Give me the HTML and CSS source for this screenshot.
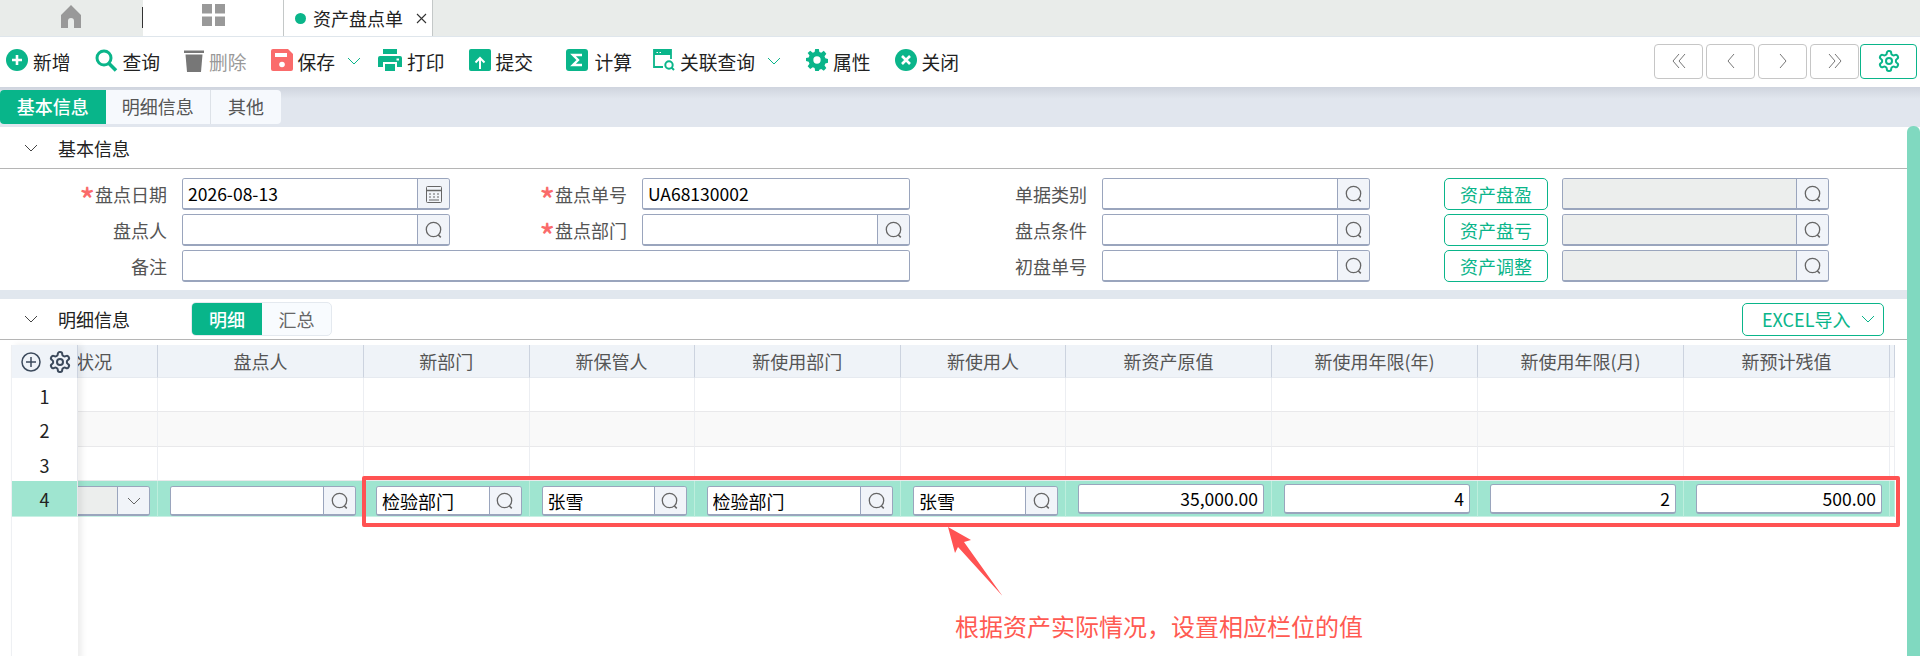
FILE: index.html
```html
<!DOCTYPE html>
<html lang="zh-CN">
<head>
    <meta charset="UTF-8">
    <meta name="viewport" content="width=device-width, initial-scale=1.0">
    <title>资产盘点单</title>
    <link rel="stylesheet" href="styles.css">
</head>
<body>
    <svg class="sprite" xmlns="http://www.w3.org/2000/svg">
        <symbol id="i-search" viewBox="0 0 20 20"><circle cx="9.5" cy="9.5" r="7.2" fill="none" stroke="currentColor" stroke-width="1.3"/><path d="M14.2 14.8l2.6 2.6" fill="none" stroke="currentColor" stroke-width="1.5"/></symbol>
        <symbol id="i-chevron" viewBox="0 0 14 8"><path d="M1 1l6 6 6-6" fill="none" stroke="currentColor" stroke-width="1"/></symbol>
        <symbol id="i-gear" viewBox="0 0 24 24"><path d="M12.22 2h-.44a2 2 0 0 0-2 2v.18a2 2 0 0 1-1 1.73l-.43.25a2 2 0 0 1-2 0l-.15-.08a2 2 0 0 0-2.73.73l-.22.38a2 2 0 0 0 .73 2.73l.15.1a2 2 0 0 1 1 1.72v.51a2 2 0 0 1-1 1.74l-.15.09a2 2 0 0 0-.73 2.73l.22.38a2 2 0 0 0 2.73.73l.15-.08a2 2 0 0 1 2 0l.43.25a2 2 0 0 1 1 1.73V20a2 2 0 0 0 2 2h.44a2 2 0 0 0 2-2v-.18a2 2 0 0 1 1-1.73l.43-.25a2 2 0 0 1 2 0l.15.08a2 2 0 0 0 2.73-.73l.22-.39a2 2 0 0 0-.73-2.73l-.15-.08a2 2 0 0 1-1-1.74v-.5a2 2 0 0 1 1-1.74l.15-.09a2 2 0 0 0 .73-2.73l-.22-.38a2 2 0 0 0-2.73-.73l-.15.08a2 2 0 0 1-2 0l-.43-.25a2 2 0 0 1-1-1.73V4a2 2 0 0 0-2-2z" fill="none" stroke="currentColor" stroke-width="2"/><circle cx="12" cy="12" r="3" fill="none" stroke="currentColor" stroke-width="2"/></symbol>
    </svg>

    <div class="page">
        <div class="tabbar">
            <div class="tab-home">
                <svg width="22" height="23" viewBox="0 0 22 23"><path d="M11 0L21 10v13h-7v-7a3 3 0 0 0-6 0v7H1V10z" fill="#999"/></svg>
            </div>
            <div class="tab-dash">
                <svg width="23" height="22" viewBox="0 0 23 22"><path d="M0 0h10v9.5H0zM13 0h10v9.5H13zM0 12.5h10V22H0zM13 12.5h10V22H13z" fill="#999"/></svg>
            </div>
            <div class="tab-doc">
                <span class="tab-dot"></span>
                <span>资产盘点单</span>
                <svg class="tab-close" width="11" height="11" viewBox="0 0 11 11"><path d="M1 1l9 9M10 1l-9 9" stroke="#333" stroke-width="1.1"/></svg>
            </div>
        </div>

        <div class="toolbar">
            <div class="tool">
                <svg class="tool-icon" width="22" height="22" viewBox="0 0 22 22"><circle cx="11" cy="11" r="11" fill="#0ab58a"/><path d="M11 6v10M6 11h10" stroke="#fff" stroke-width="2.6"/></svg>
                <span>新增</span>
            </div>
            <div class="tool">
                <svg class="tool-icon" width="23" height="23" viewBox="0 0 23 23"><circle cx="9" cy="9" r="7" fill="none" stroke="#0ab58a" stroke-width="3"/><path d="M13.5 14l7.5 7.5" stroke="#0ab58a" stroke-width="3.6"/></svg>
                <span>查询</span>
            </div>
            <div class="tool tool-disabled">
                <svg class="tool-icon" width="20" height="23" viewBox="0 0 20 23"><path d="M0 1.5h20V4H0z" fill="#777"/><path d="M1.5 5.5h17L17 23H3z" fill="#777"/></svg>
                <span>删除</span>
            </div>
            <div class="tool tool-menu">
                <svg class="tool-icon" width="22" height="22" viewBox="0 0 22 22"><path d="M2 0h15l5 5v15a2 2 0 0 1-2 2H2a2 2 0 0 1-2-2V2a2 2 0 0 1 2-2z" fill="#fa6b6b"/><path d="M4 4h12v4H4z" fill="#fff"/><circle cx="11" cy="15.5" r="2.8" fill="#fff"/></svg>
                <span>保存</span>
                <svg class="tool-chevron" width="14" height="8"><use href="#i-chevron"/></svg>
            </div>
            <div class="tool">
                <svg class="tool-icon" width="24" height="22" viewBox="0 0 24 22"><path d="M5 0h14v5H5z" fill="#0ab58a"/><path d="M2 7h20a2 2 0 0 1 2 2v9h-5v-5H5v5H0V9a2 2 0 0 1 2-2z" fill="#0ab58a"/><path d="M7 15h10v7H7z" fill="#0ab58a"/><path d="M18.5 9.5H21v2h-2.5z" fill="#fff"/></svg>
                <span>打印</span>
            </div>
            <div class="tool tool-far">
                <svg class="tool-icon" width="22" height="22" viewBox="0 0 22 22"><rect width="22" height="22" rx="2" fill="#0ab58a"/><path d="M11 20V10M6.5 13.5L11 9l4.5 4.5" fill="none" stroke="#fff" stroke-width="2"/></svg>
                <span>提交</span>
            </div>
            <div class="tool tool-near">
                <svg class="tool-icon" width="22" height="22" viewBox="0 0 22 22"><rect width="22" height="22" rx="3" fill="#0ab58a"/><path d="M16 6H7l5 5-5 5h9" fill="none" stroke="#fff" stroke-width="2.4"/></svg>
                <span class="tool-wide">计算</span>
            </div>
            <div class="tool tool-menu tool-menu-wide">
                <svg class="tool-icon" width="22" height="22" viewBox="0 0 22 22"><path d="M10 18H1V1h17v9" fill="none" stroke="#0ab58a" stroke-width="1.8"/><path d="M1 1h17v5H1z" fill="#0ab58a"/><path d="M3.5 3H5v1H3.5zM6.5 3H8v1H6.5z" fill="#fff"/><circle cx="16" cy="16" r="3.7" fill="none" stroke="#0ab58a" stroke-width="2"/><path d="M18.5 18.5l2.500 2.500" stroke="#0ab58a" stroke-width="2"/></svg>
                <span>关联查询</span>
                <svg class="tool-chevron" width="14" height="8"><use href="#i-chevron"/></svg>
            </div>
            <div class="tool">
                <svg class="tool-icon" width="22" height="22" viewBox="0 0 24 24"><path fill-rule="evenodd" d="M14 0l.6 3.3 2 .8L19.4 2l2.800 3.200-2 2.800.9 2.100 3 .7v4.300l-3 .8-.9 2 2 2.900-2.800 3-2.800-2-2 .9L14 24H10l-.6-3.200-2-.9-2.800 2-2.800-3 2-2.900-.9-2-3-.8V9.900l3-.7.900-2.100-2-2.800L4.600 2l2.800 2.100 2-.8L10 0zM12 8a4 4 0 1 0 0 8 4 4 0 0 0 0-8z" fill="#0ab58a"/></svg>
                <span>属性</span>
            </div>
            <div class="tool">
                <svg class="tool-icon" width="22" height="22" viewBox="0 0 22 22"><circle cx="11" cy="11" r="11" fill="#0ab58a"/><path d="M7 7l8 8M15 7l-8 8" stroke="#fff" stroke-width="2.6"/></svg>
                <span>关闭</span>
            </div>

            <div class="pager">
                <button class="page-btn"><svg width="14" height="16" viewBox="0 0 14 16"><path d="M7 1L1 8l6 7M13 1L7 8l6 7" fill="none" stroke="#777" stroke-width="1"/></svg></button>
                <button class="page-btn"><svg width="8" height="16" viewBox="0 0 8 16"><path d="M7 1L1 8l6 7" fill="none" stroke="#777" stroke-width="1"/></svg></button>
                <button class="page-btn"><svg width="8" height="16" viewBox="0 0 8 16"><path d="M1 1l6 7-6 7" fill="none" stroke="#777" stroke-width="1"/></svg></button>
                <button class="page-btn"><svg width="14" height="16" viewBox="0 0 14 16"><path d="M1 1l6 7-6 7M7 1l6 7-6 7" fill="none" stroke="#777" stroke-width="1"/></svg></button>
                <button class="page-btn page-btn-gear"><svg width="24" height="24"><use href="#i-gear"/></svg></button>
            </div>
        </div>

        <div class="tabstrip">
            <div class="subtabs">
                <span class="subtab subtab-on">基本信息</span>
                <span class="subtab">明细信息</span>
                <span class="subtab subtab-last">其他</span>
            </div>
        </div>

        <section class="section">
            <div class="section-head">
                <svg class="section-chevron" width="14" height="8"><use href="#i-chevron"/></svg>
                <span>基本信息</span>
            </div>
            <div class="form">
                <label class="label"><span class="required">*</span>盘点日期</label>
                <div class="field">
                    <input type="text" value="2026-08-13">
                    <span class="addon">
                        <svg width="16" height="18" viewBox="0 0 16 18"><rect x=".5" y="1.5" width="15" height="16" rx="1" fill="none" stroke="#666"/><path d="M.5 5.5h15" stroke="#666" stroke-width="1.5"/><path d="M3 9h2M7 9h2M11 9h2M3 12h2M7 12h2M11 12h2M3 15h10" stroke="#666"/></svg>
                    </span>
                </div>
                <label class="label"><span class="required">*</span>盘点单号</label>
                <div class="field"><input type="text" value="UA68130002"></div>
                <label class="label">单据类别</label>
                <div class="field"><input type="text"><span class="addon"><svg width="20" height="20"><use href="#i-search"/></svg></span></div>
                <div class="action"><button class="btn-outline">资产盘盈</button></div>
                <div class="field field-after"><input type="text" class="input-off" disabled><span class="addon"><svg width="20" height="20"><use href="#i-search"/></svg></span></div>

                <label class="label">盘点人</label>
                <div class="field"><input type="text"><span class="addon"><svg width="20" height="20"><use href="#i-search"/></svg></span></div>
                <label class="label"><span class="required">*</span>盘点部门</label>
                <div class="field"><input type="text"><span class="addon"><svg width="20" height="20"><use href="#i-search"/></svg></span></div>
                <label class="label">盘点条件</label>
                <div class="field"><input type="text"><span class="addon"><svg width="20" height="20"><use href="#i-search"/></svg></span></div>
                <div class="action"><button class="btn-outline">资产盘亏</button></div>
                <div class="field field-after"><input type="text" class="input-off" disabled><span class="addon"><svg width="20" height="20"><use href="#i-search"/></svg></span></div>

                <label class="label">备注</label>
                <div class="field field-long"><input type="text"></div>
                <label class="label">初盘单号</label>
                <div class="field"><input type="text"><span class="addon"><svg width="20" height="20"><use href="#i-search"/></svg></span></div>
                <div class="action"><button class="btn-outline">资产调整</button></div>
                <div class="field field-after"><input type="text" class="input-off" disabled><span class="addon"><svg width="20" height="20"><use href="#i-search"/></svg></span></div>
            </div>
        </section>

        <section class="section section-detail">
            <div class="section-head">
                <svg class="section-chevron" width="14" height="8"><use href="#i-chevron"/></svg>
                <span>明细信息</span>
                <div class="segment">
                    <span class="segment-item segment-on">明细</span>
                    <span class="segment-item">汇总</span>
                </div>
                <button class="btn-excel">EXCEL导入<svg width="14" height="8"><use href="#i-chevron"/></svg></button>
            </div>

            <div class="grid">
                <div class="grid-frozen">
                    <div class="frozen-head">
                        <svg width="20" height="20" viewBox="0 0 20 20"><circle cx="10" cy="10" r="9" fill="none" stroke="#3c4a5c" stroke-width="1.5"/><path d="M10 5v10M5 10h10" stroke="#3c4a5c" stroke-width="1.5"/></svg>
                        <svg class="frozen-gear" width="24" height="24"><use href="#i-gear"/></svg>
                    </div>
                    <div class="frozen-num">1</div>
                    <div class="frozen-num">2</div>
                    <div class="frozen-num">3</div>
                    <div class="frozen-num frozen-on">4</div>
                </div>
                <div class="grid-body">
                    <div class="grid-row grid-head">
                        <div class="cell cell-status"><span>状况</span></div>
                        <div class="cell">盘点人</div>
                        <div class="cell">新部门</div>
                        <div class="cell">新保管人</div>
                        <div class="cell">新使用部门</div>
                        <div class="cell">新使用人</div>
                        <div class="cell">新资产原值</div>
                        <div class="cell">新使用年限(年)</div>
                        <div class="cell">新使用年限(月)</div>
                        <div class="cell">新预计残值</div>
                        <div class="cell"></div>
                    </div>
                    <div class="grid-row"><div class="cell"></div><div class="cell"></div><div class="cell"></div><div class="cell"></div><div class="cell"></div><div class="cell"></div><div class="cell"></div><div class="cell"></div><div class="cell"></div><div class="cell"></div><div class="cell"></div></div>
                    <div class="grid-row grid-even"><div class="cell"></div><div class="cell"></div><div class="cell"></div><div class="cell"></div><div class="cell"></div><div class="cell"></div><div class="cell"></div><div class="cell"></div><div class="cell"></div><div class="cell"></div><div class="cell"></div></div>
                    <div class="grid-row"><div class="cell"></div><div class="cell"></div><div class="cell"></div><div class="cell"></div><div class="cell"></div><div class="cell"></div><div class="cell"></div><div class="cell"></div><div class="cell"></div><div class="cell"></div><div class="cell"></div></div>
                    <div class="grid-row grid-active">
                        <div class="cell cell-edit cell-first"><div class="field field-cell field-select"><input type="text" class="input-off" disabled><span class="addon"><svg width="14" height="8"><use href="#i-chevron"/></svg></span></div></div>
                        <div class="cell cell-edit"><div class="field field-cell"><input type="text"><span class="addon"><svg width="20" height="20"><use href="#i-search"/></svg></span></div></div>
                        <div class="cell cell-edit"><div class="field field-cell"><input type="text" value="检验部门"><span class="addon"><svg width="20" height="20"><use href="#i-search"/></svg></span></div></div>
                        <div class="cell cell-edit"><div class="field field-cell"><input type="text" value="张雪"><span class="addon"><svg width="20" height="20"><use href="#i-search"/></svg></span></div></div>
                        <div class="cell cell-edit"><div class="field field-cell"><input type="text" value="检验部门"><span class="addon"><svg width="20" height="20"><use href="#i-search"/></svg></span></div></div>
                        <div class="cell cell-edit"><div class="field field-cell"><input type="text" value="张雪"><span class="addon"><svg width="20" height="20"><use href="#i-search"/></svg></span></div></div>
                        <div class="cell cell-edit"><div class="field field-num"><input type="text" value="35,000.00"></div></div>
                        <div class="cell cell-edit"><div class="field field-num"><input type="text" value="4"></div></div>
                        <div class="cell cell-edit"><div class="field field-num"><input type="text" value="2"></div></div>
                        <div class="cell cell-edit"><div class="field field-num"><input type="text" value="500.00"></div></div>
                        <div class="cell"></div>
                    </div>
                </div>
            </div>
        </section>

        <!-- annotation drawn over the grid -->
        <div class="note-frame"></div>
        <svg class="note-arrow" width="60" height="75" viewBox="0 0 60 75"><path d="M3 2L26 15l-7 2 38.5 54L13 22l-3 6z" fill="#ff5252"/></svg>
        <div class="note-text">根据资产实际情况，设置相应栏位的值</div>

        <div class="scroll-thumb"></div>
    </div>
</body>
</html>
```

FILE: styles.css
```css
* {
    box-sizing: border-box;
}

body {
    font-family: "Noto Sans CJK SC", "Noto Sans", sans-serif;
    font-size: 18px;
    background-color: #fff;
    color: #222;
    margin: 0;
}

.sprite {
    display: none;
}

.page {
    position: relative;
    height: 656px;
    overflow: hidden;
}

/* top tabs */
.tabbar {
    display: flex;
    height: 37px;
    background-color: #e9ecea;
    border-bottom: 1px solid #dfe6ec;
}

.tab-home, .tab-dash {
    width: 143px;
    display: flex;
    justify-content: center;
    padding-top: 5px;
}

.tab-home {
    padding-right: 2px;
    background: linear-gradient(#333, #333) right 7px / 1px 21px no-repeat;
}

.tab-dash {
    width: 140px;
    background-color: #fff;
    padding-top: 4px;
}

.tab-doc {
    width: 150px;
    height: 36px;
    display: flex;
    align-items: center;
    padding-left: 11px;
    background-color: #fff;
    border-left: 1px solid #c4c8c8;
    border-right: 1px solid #c4c8c8;
}

.tab-dot {
    width: 11px;
    height: 11px;
    border-radius: 50%;
    background-color: #0ab58a;
    margin-right: 7px;
}

.tab-close {
    margin-left: 13px;
}

/* toolbar */
.toolbar {
    display: flex;
    align-items: center;
    height: 50px;
    padding: 0 0 2px 6px;
    font-size: 18.75px;
    color: #222;
    background-color: #fff;
}

.tool {
    display: flex;
    align-items: center;
    gap: 5px;
    margin-right: 24px;
    white-space: nowrap;
}

.tool-icon {
    margin-top: -2px;
}

.tool-disabled {
    color: #999;
}

.tool-menu {
    margin-right: 17px;
}

.tool-menu-wide {
    margin-right: 25px;
}

.tool-far {
    margin-right: 33px;
}

.tool-near {
    margin-right: 21px;
}

.tool-wide {
    margin-left: 1.5px;
}

.tool-chevron {
    margin-left: 7px;
    color: #0ab58a;
}

.pager {
    display: flex;
    gap: 3px;
    margin-left: auto;
    margin-right: 3px;
}

.page-btn {
    width: 49px;
    height: 35px;
    padding: 0;
    display: flex;
    align-items: center;
    justify-content: center;
    background-color: #fff;
    border: 1px solid #c6c6c6;
    border-radius: 4px;
}

.page-btn-gear {
    width: 57px;
    margin-left: -2px;
    color: #0ab58a;
    border-color: #0ab58a;
}

/* form tabs */
.tabstrip {
    height: 40px;
    padding-top: 3px;
    background: linear-gradient(#cfd4de, #e1e6ee 12px);
}

.subtabs {
    display: flex;
    width: 281px;
    height: 34px;
    background-color: #f6f9fd;
    border-radius: 4px;
    overflow: hidden;
    color: #555;
}

.subtab {
    width: 105.5px;
    line-height: 33px;
    text-align: center;
    border-right: 1px solid #dde2e8;
}

.subtab-last {
    width: 70px;
    border-right: none;
}

.subtab-on {
    background-color: #08b58a;
    color: #fff;
    font-weight: 500;
    border-right: none;
}

/* sections */
.section {
    background-color: #fff;
}

.section-head {
    display: flex;
    align-items: center;
    height: 42px;
    padding-left: 24px;
    border-bottom: 1px solid #b5b5b5;
}

.section-chevron {
    margin-right: 20px;
    color: #444;
}

.section-detail {
    border-top: 9px solid #e1e7ee;
}

.section-detail .section-head {
    height: 41px;
}

/* form */
.form {
    display: grid;
    grid-template-columns: 182px 268px 192px 268px 192px 268px 178px 281px;
    grid-auto-rows: 32px;
    row-gap: 4px;
    padding: 9px 0 8px;
}

.label {
    text-align: right;
    padding-right: 15px;
    line-height: 32px;
    color: #555;
}

.required {
    color: #fa6b6b;
    font-size: 32px;
    font-weight: 500;
    line-height: 20px;
    vertical-align: -10px;
}

.field {
    display: flex;
    height: 32px;
    border: 1px solid #9aa5bd;
    border-bottom-width: 2px;
    border-radius: 3px;
    overflow: hidden;
    background-color: #fff;
}

.field input {
    flex: 1;
    min-width: 0;
    height: 100%;
    padding: 0 5px;
    border: none;
    outline: none;
    font: inherit;
    font-size: 17.5px;
    color: #000;
    background-color: #fff;
}

.field input.input-off {
    background-color: #eceeed;
}

.addon {
    flex: none;
    width: 32px;
    display: flex;
    align-items: center;
    justify-content: center;
    border-left: 1px solid #9aa5bd;
    background-color: #f1f4f9;
    color: #666;
}

.field-long {
    grid-column: span 3;
}

.field-after {
    margin-left: 14px;
}

.action {
    display: flex;
    justify-content: flex-end;
}

.btn-outline {
    width: 104px;
    height: 32px;
    padding: 0;
    font: inherit;
    color: #0ab58a;
    background-color: #fff;
    border: 1px solid #0ab58a;
    border-radius: 5px;
}

/* detail head */
.segment {
    display: flex;
    width: 141px;
    height: 34px;
    margin-left: 61px;
    border: 1px solid #e4e9ef;
    border-radius: 5px;
    overflow: hidden;
    background-color: #f8fbfe;
    color: #666;
}

.segment-item {
    width: 70px;
    line-height: 32px;
    text-align: center;
}

.segment-on {
    width: 71px;
    background-color: #08b58a;
    color: #fff;
    font-weight: 500;
}

.btn-excel {
    display: flex;
    align-items: center;
    gap: 11px;
    width: 142px;
    height: 33px;
    margin-left: auto;
    margin-right: 36px;
    padding: 0 0 0 19px;
    font: inherit;
    color: #0ab58a;
    background-color: #fff;
    border: 1px solid #0ab58a;
    border-radius: 5px;
}

/* grid */
.grid {
    display: flex;
    height: 316px;
    margin: 5px 25px 0 11px;
}

.grid-frozen {
    position: relative;
    z-index: 1;
    flex: none;
    width: 67px;
    background-color: #fff;
    border-left: 1px solid #eef0f3;
    box-shadow: 4px 0 6px rgba(0, 0, 0, 0.07);
}

.frozen-head {
    display: flex;
    align-items: center;
    gap: 8px;
    height: 33px;
    padding-left: 9px;
    background-color: #eff3f8;
    border-right: 1px solid #ccd3df;
    color: #3c4a5c;
}

.frozen-gear {
    margin-left: -1px;
}

.frozen-num {
    height: 34.4px;
    line-height: 36px;
    text-align: center;
    border-right: 1px solid #e6e8ec;
}

.frozen-on {
    height: 36px;
    background-color: #9fe5d0;
    border-bottom: 1px solid #c8f0e4;
}

.grid-body {
    flex: 1;
    min-width: 0;
    overflow: hidden;
}

.grid-row {
    display: grid;
    grid-template-columns: 80px 206px 165.5px 165px 206.5px 165px 206px 206px 206px 206px 5px;
    height: 34.4px;
}

.cell {
    min-width: 0;
    border-right: 1px solid #eceef2;
    border-bottom: 1px solid #e9e9eb;
}

.grid-head {
    height: 33px;
    background-color: #eff3f8;
    color: #555;
}

.grid-head .cell {
    line-height: 32px;
    text-align: center;
    border-right-color: #ccd3df;
    border-bottom-color: #e6eaf0;
}

.grid-head .cell-status {
    display: flex;
    justify-content: flex-end;
    padding-right: 45px;
    white-space: nowrap;
}

.cell-status span {
    flex: none;
}

.grid-even {
    background-color: #f9f9f9;
}

.grid-active {
    height: 36px;
    background-color: #9fe5d0;
}

.grid-active .cell {
    border-color: #bdeedd;
    border-bottom-color: #c8f0e4;
}

.cell-edit {
    padding: 3px 7px 0 12px;
}

.cell-first {
    padding-left: 0;
}

.field-cell {
    height: 30px;
    margin-top: 2px;
}

.field-cell input {
    font-size: 18px;
}

.field-select {
    margin-left: -10px;
}

.field-num {
    height: 30px;
}

.field-num input {
    text-align: right;
}

/* annotation */
.note-frame {
    position: absolute;
    left: 362px;
    top: 476px;
    width: 1538px;
    height: 51px;
    border: 4px solid #ff5252;
    border-radius: 2px;
}

.note-arrow {
    position: absolute;
    left: 945px;
    top: 525px;
}

.note-text {
    position: absolute;
    left: 955px;
    top: 608px;
    font-size: 24px;
    line-height: 36px;
    color: #ff5a52;
    white-space: nowrap;
}

.scroll-thumb {
    position: absolute;
    left: 1907px;
    top: 126px;
    width: 13px;
    height: 530px;
    background-color: #80d9c0;
    border-radius: 6px 6px 0 0;
}
```
